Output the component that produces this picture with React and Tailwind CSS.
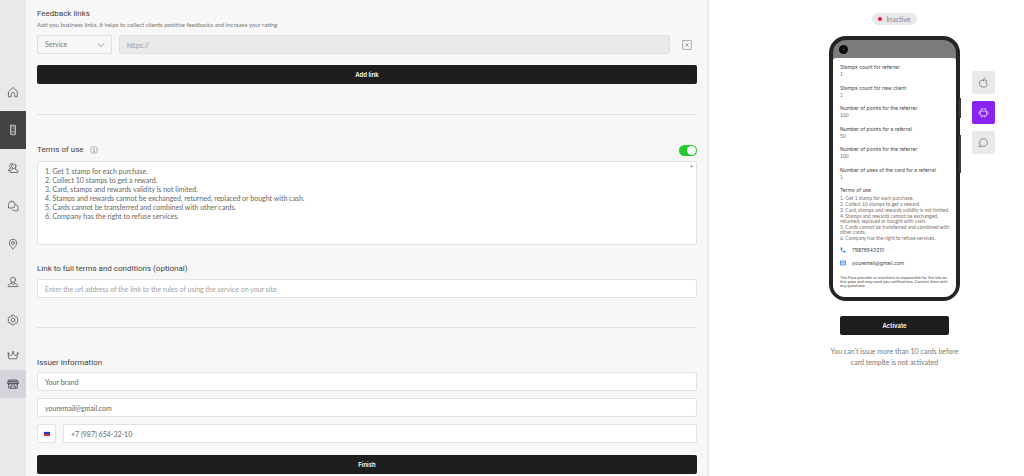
import React from "react";

const terms = [
  "1. Get 1 stamp for each purchase.",
  "2. Collect 10 stamps to get a reward.",
  "3. Card, stamps and rewards validity is not limited.",
  "4. Stamps and rewards cannot be exchanged, returned, replaced or bought with cash.",
  "5. Cards cannot be transferred and combined with other cards.",
  "6. Company has the right to refuse services.",
];

const stats = [
  ["Stamps count for referrer", "1"],
  ["Stamps count for new client", "1"],
  ["Number of points for the referrer", "100"],
  ["Number of points for a referral", "50"],
  ["Number of points for the referrer", "100"],
  ["Number of uses of the card for a referral", "1"],
];

function Icon({ children, className = "size-[12px]" }) {
  return (
    <svg viewBox="0 0 24 24" fill="none" stroke="currentColor" strokeWidth="1.8" strokeLinecap="round" strokeLinejoin="round" className={className} aria-hidden="true">
      {children}
    </svg>
  );
}

const HomeIcon = () => (
  <Icon>
    <path d="M3.500 10.800 12 3l8.500 7.800V21.500H15.500v-5a3.500 3.500 0 0 0-7 0v5h-5z" />
  </Icon>
);
const CardIcon = () => (
  <Icon>
    <rect x="7" y="2.500" width="10" height="19" rx="1" fill="currentColor" fillOpacity="0.55" />
    <path d="M10 6h4M9.500 18.500h5M9.500 10h5L12 13.500z" stroke="#434343" />
  </Icon>
);
const ClientsIcon = () => (
  <Icon>
    <circle cx="13.500" cy="8.500" r="4.500" />
    <path d="M11 3.500A4.300 4.300 0 0 0 5 7c0 1.700.7 3 1.800 4v2L4 14.500C2.700 15.200 2.200 16.300 2.200 17.500H6M11 12.500v2L8 16c-1.200.7-1.700 1.600-1.700 3v2H22v-1.800c0-1.400-.6-2.500-1.800-3.200L16.500 14.500v-2" />
  </Icon>
);
const ChatIcon = () => (
  <Icon>
    <path d="M9.500 2.500a6.500 6.500 0 1 1 0 13.500H3V9a6.500 6.500 0 0 1 6.500-6.500z" />
    <path d="M17.500 9a6.300 6.300 0 0 1 4.500 6v6.500h-6.500a6.300 6.300 0 0 1-5-3" />
  </Icon>
);
const PinIcon = () => (
  <Icon>
    <path d="M12 21.500S4.500 16 4.500 10a7.500 7.500 0 0 1 15 0c0 6-7.500 11.500-7.500 11.500z" />
    <circle cx="12" cy="10" r="3" />
  </Icon>
);
const ManagerIcon = () => (
  <Icon>
    <circle cx="12" cy="7.500" r="5" />
    <path d="M9 12.500v2L5 16c-1.500.5-2.500 1.700-2.500 3.200v2h19v-2c0-1.500-1-2.700-2.500-3.200L15 14.500v-2" />
    <path d="m9 14.500 3 3 3-3" />
  </Icon>
);
const GearIcon = () => (
  <Icon>
    <path d="M9.800 2.500h4.400l1 2.600 1.800 1.100 2.800-.5 2.200 3.800L20.200 12l1.800 2.500-2.200 3.800-2.800-.5-1.800 1.100-1 2.600H9.800l-1-2.600L7 17.800l-2.800.5L2 14.500 3.800 12 2 9.500l2.200-3.800 2.800.5 1.800-1.100z" />
    <circle cx="12" cy="12" r="3.600" />
  </Icon>
);
const CrownIcon = () => (
  <Icon>
    <path d="M4.500 19.500h15l1.500-9-4.500 3L12 8l-4.500 5.500-4.500-3z" />
    <circle cx="12" cy="6" r="1.200" />
    <circle cx="2.500" cy="8.500" r="1.100" />
    <circle cx="21.500" cy="8.500" r="1.100" />
  </Icon>
);
const StoreIcon = () => (
  <Icon>
    <path d="M4 4h16l2.500 5v2h-21V9z" fill="currentColor" fillOpacity="0.35" />
    <path d="M2 7.500h20M3.500 11.500V20.500h17V11.500M1.500 11a2.800 2.800 0 0 0 5.200 0 2.800 2.800 0 0 0 5.300 0 2.800 2.800 0 0 0 5.300 0 2.800 2.800 0 0 0 5.200 0M7.500 20.500V16h9v4.500" />
  </Icon>
);

const nav = [
  { label: "Home", icon: HomeIcon, box: "h-[38px]" },
  { label: "Cards", icon: CardIcon, box: "h-[38px] bg-[#434343] text-[#c4c4c4]" },
  { label: "Clients", icon: ClientsIcon, box: "h-[38px]" },
  { label: "Messages", icon: ChatIcon, box: "h-[38px]" },
  { label: "Locations", icon: PinIcon, box: "h-[38px]" },
  { label: "Managers", icon: ManagerIcon, box: "h-[38px]" },
  { label: "Settings", icon: GearIcon, box: "h-[38px]" },
  { label: "Plans", icon: CrownIcon, box: "h-[31px]" },
  { label: "Store", icon: StoreIcon, box: "h-[28px] bg-[#d4d4dc] text-[#55555a]" },
];

const field = "h-[19px] w-full min-w-0 rounded-[2px] border border-[#e2e2e6] bg-white px-[7px] text-[7px] text-[#666] outline-none placeholder:text-[#a0a0a4]";
const title = "font-['Roboto',sans-serif] text-[8px] leading-[10px] text-[#3f3f3f]";
const darkButton = "h-[19px] w-full rounded-[2px] bg-[#1e1e1e] font-['Inter',sans-serif] text-[6px] font-semibold text-white";

function Sidebar() {
  return (
    <nav aria-label="Main" className="w-[26px] shrink-0 bg-[#e9e9eb] pt-[73px] text-[#66666a]">
      {nav.map(({ label, icon: Glyph, box }) => (
        <a key={label} href="#" aria-label={label} className={"flex items-center justify-center " + box}>
          <Glyph />
        </a>
      ))}
    </nav>
  );
}

function Editor() {
  return (
    <main className="min-w-0 flex-1 pt-[9px] pr-[10px] pl-[11px]">
      <section>
        <h2 className={title}>Feedback links</h2>
        <p className="mt-[2px] text-[6px] leading-[8px] text-[#777]">Add you business links. It helps to collect clients positive feedbacks and increase your rating</p>
        <div className="mt-[6px] flex items-center">
          <div className="relative w-[75px] shrink-0">
            <select aria-label="Link type" className="block h-[19px] w-full appearance-none rounded-[2px] border border-[#dedee2] bg-[#f7f7f7] px-[7px] text-[7px] text-[#777]">
              <option>Service</option>
            </select>
            <Icon className="pointer-events-none absolute top-[5px] right-[6px] size-[10px] text-[#858585]">
              <path d="m5 9 7 7 7-7" />
            </Icon>
          </div>
          <input aria-label="Link address" placeholder="https://" disabled className="ml-[7px] h-[19px] min-w-0 flex-1 rounded-[2px] border border-[#e0e0e2] bg-[#eaeaea] px-[7px] text-[7px] placeholder:text-[#a0a0a4]" />
          <button aria-label="Remove link" className="mr-[5px] ml-[12px] text-[#8e8e8e]">
            <Icon className="block size-[10px]">
              <rect x="1.500" y="1.500" width="21" height="21" rx="1.500" />
              <path d="m9 9 6 6M15 9l-6 6" strokeWidth="2.200" />
            </Icon>
          </button>
        </div>
        <button className={darkButton + " mt-[11px] block"}>Add link</button>
      </section>

      <hr className="mt-[30px] border-[#e0e0e3]" />

      <section className="mt-[29px]">
        <div className="flex h-[12px] items-center">
          <label htmlFor="terms" className={title}>Terms of use</label>
          <Icon className="ml-[6px] size-[8px] text-[#8b8b8b]">
            <circle cx="12" cy="12" r="10.500" />
            <path d="M12 11v6.500M10 11h2M10 17.500h4M12 6.500v1" />
          </Icon>
          <label className="relative ml-auto block h-[11px] w-[18px]">
            <input type="checkbox" defaultChecked aria-label="Show terms of use" className="peer block h-[11px] w-[18px] appearance-none rounded-full bg-[#c9c9c9] checked:bg-[#22cc2b]" />
            <span className="absolute top-px left-px size-[9px] rounded-full bg-white shadow-sm peer-checked:left-[8px]" />
          </label>
        </div>
        <div className="relative mt-[5px]">
          <textarea id="terms" defaultValue={terms.join("\n")} className="block h-[84px] w-full resize-none overflow-hidden rounded-[2px] border border-[#e2e2e6] bg-white px-[7px] py-[5px] text-[7px] leading-[9px] text-[#666] outline-none" />
          <svg viewBox="0 0 4 3" className="absolute top-[4px] right-[4px] h-[2px] w-[3px]" aria-hidden="true">
            <path d="M2 0 4 3H0z" fill="#777" />
          </svg>
        </div>
        <label htmlFor="link" className={title + " mt-[19px] block"}>Link to full terms and conditions (optional)</label>
        <input id="link" placeholder="Enter the url address of the link to the rules of using the service on your site" className={field + " mt-[5px] block"} />
      </section>

      <hr className="mt-[29px] border-[#e0e0e3]" />

      <section className="mt-[30px]">
        <h2 className={title}>Issuer information</h2>
        <div className="mt-[4px] flex flex-col gap-[7px]">
          <input aria-label="Brand" defaultValue="Your brand" className={field} />
          <input aria-label="Email" type="email" defaultValue="youremail@gmail.com" className={field} />
          <div className="flex gap-[7px]">
            <button aria-label="Country code" className="flex h-[19px] w-[19px] shrink-0 items-center justify-center rounded-[2px] border border-[#e2e2e6] bg-white">
              <svg viewBox="0 0 6 5" className="h-[5px] w-[6px]" aria-hidden="true">
                <rect width="6" height="5" fill="#ececf4" />
                <rect y="1" width="6" height="2" fill="#2a35d0" />
                <rect y="3" width="6" height="2" fill="#e4253c" />
              </svg>
            </button>
            <input aria-label="Phone" type="tel" defaultValue="+7 (987) 654-32-10" className={field} />
          </div>
        </div>
        <button className={darkButton + " mt-[12px] mb-[2px] block"}>Finish</button>
      </section>
    </main>
  );
}

function Phone() {
  return (
    <div className="relative w-[131px] rounded-[17px] border-[4px] border-[#242424] bg-[#7b7b7d]">
      <span className="absolute top-[58px] -right-[5px] h-[20px] w-[2px] bg-[#3a3a3a]" />
      <span className="absolute top-[95px] -right-[5px] h-[38px] w-[2px] bg-[#3a3a3a]" />
      <div className="flex h-[18px] items-center pl-[6px]">
        <svg viewBox="0 0 18 18" className="size-[9px]" aria-hidden="true">
          <circle cx="9" cy="9" r="9" fill="#0c0c0c" />
          <circle cx="9" cy="9" r="2" fill="#3c4046" />
        </svg>
      </div>
      <div className="rounded-t-[3px] rounded-b-[12px] bg-white pt-[5px] pr-[3px] pb-[9px] pl-[7px]">
        <dl className="flex h-[118px] flex-col justify-between">
          {stats.map(([name, value], i) => (
            <div key={i}>
              <dt className="font-['Inter',sans-serif] text-[5px] leading-[8px] whitespace-nowrap text-[#3f3f3f]">{name}</dt>
              <dd className="text-[5px] leading-[7px] text-[#80706c]">{value}</dd>
            </div>
          ))}
        </dl>
        <h3 className="mt-[5px] font-['Inter',sans-serif] text-[5px] leading-[8px] text-[#3f3f3f]">Terms of use</h3>
        <ol className="mt-[2px] flex flex-col gap-px text-[5px] leading-[5px] text-[#80706c]">
          {terms.map((t) => (
            <li key={t}>{t}</li>
          ))}
        </ol>
        <div className="mt-[5px] flex flex-col gap-[5px] font-['Inter',sans-serif] text-[5px] leading-[8px] text-[#444]">
          <p className="flex items-center gap-[6px]">
            <svg viewBox="0 0 24 24" className="size-[6px]" aria-hidden="true">
              <path fill="#2f7de8" d="M2 2h6l2 6-3 3c1.500 3 3.500 5 6.500 6.500l3-3 6 2V22C11 23 1 13 2 2z" />
            </svg>
            79876543210
          </p>
          <p className="flex items-center gap-[6px]">
            <svg viewBox="0 0 24 24" className="size-[6px]" aria-hidden="true">
              <path fill="#d8e8fc" stroke="#2f7de8" strokeWidth="3" d="M2 4h20v16H2zM2 5l10 8L22 5" />
            </svg>
            youremail@gmail.com
          </p>
        </div>
        <p className="mt-[9px] font-['Roboto',sans-serif] text-[4px] leading-[4px] font-medium whitespace-nowrap text-[#777]">
          The Pass provider or merchant is responsible for the info on
          <br />
          this pass and may send you notifications. Contact them with
          <br />
          any questions.
        </p>
      </div>
    </div>
  );
}

function Preview() {
  const tab = "flex size-[23px] items-center justify-center rounded-[2px] ";
  return (
    <aside className="w-[317px] shrink-0 border-l-2 border-[#ececee] bg-white pt-[13px] pl-[120px]">
      <div className="flex w-[131px] justify-center">
        <span className="flex h-[12px] items-center gap-[4px] rounded-full bg-[#e9e9eb] px-[6px] text-[7px] text-[#85858c]">
          <span className="size-[4px] rounded-full bg-[#f0142d]" />
          Inactive
        </span>
      </div>
      <div className="mt-[11px] flex items-start gap-[12px]">
        <Phone />
        <div className="flex flex-col gap-[7px] pt-[35px]">
          <button aria-label="Apple" className={tab + "bg-[#e9e9eb] text-[#77777b]"}>
            <Icon className="size-[11px]">
              <path d="M12 7.500c2-1.300 5.500-1.500 7.500 1.500-3 2-2.500 6 1 7.500-1.500 4-4.500 6.500-8.500 5-4 1.500-9-2.500-9-8 0-5.500 5-8 9-6zM12 6.500c0-2.500 1-4 3-4.500" />
            </Icon>
          </button>
          <button aria-label="Android" className={tab + "bg-[#8a22f2] text-[#e6d2ff]"}>
            <Icon className="size-[11px]">
              <path d="M5.500 9h13v8.500a2 2 0 0 1-2 2h-9a2 2 0 0 1-2-2zM5.500 9C6 6 8.500 4 12 4s6 2 6.500 5M8 4.500 7 2.500M16 4.500l1-2M2.500 10.500v5M21.500 10.500v5M9 19.500V22M15 19.500V22" />
            </Icon>
          </button>
          <button aria-label="Messages" className={tab + "bg-[#e9e9eb] text-[#77777b]"}>
            <Icon className="size-[11px]">
              <path d="M3 21 4.500 16.500A8.500 8.500 0 1 1 8.500 20z" />
            </Icon>
          </button>
        </div>
      </div>
      <div className="mt-[15px] w-[131px] text-center">
        <div className="px-[11px]">
          <button className={darkButton + " block"}>Activate</button>
        </div>
        <p className="mt-[11px] text-[7px] leading-[11px] whitespace-nowrap text-[#777]">
          You can't issue more than 10 cards before
          <br />
          card templte is not activated
        </p>
      </div>
    </aside>
  );
}

export default function App() {
  return (
    <div className="flex min-h-screen bg-[#f7f7f7] font-['Lato',sans-serif]">
      <Sidebar />
      <Editor />
      <Preview />
    </div>
  );
}
